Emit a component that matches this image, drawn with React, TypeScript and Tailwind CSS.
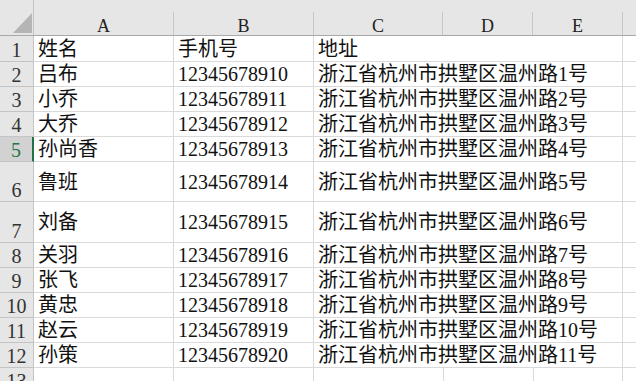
import React from "react";

const rows = [
  { n: 1, h: "h-[26px]", tall: false, a: "姓名", b: "手机号", c: "地址" },
  { n: 2, h: "h-[25px]", tall: false, a: "吕布", b: "12345678910", c: "浙江省杭州市拱墅区温州路1号" },
  { n: 3, h: "h-[25px]", tall: false, a: "小乔", b: "12345678911", c: "浙江省杭州市拱墅区温州路2号" },
  { n: 4, h: "h-[25px]", tall: false, a: "大乔", b: "12345678912", c: "浙江省杭州市拱墅区温州路3号" },
  { n: 5, h: "h-[25px]", tall: false, a: "孙尚香", b: "12345678913", c: "浙江省杭州市拱墅区温州路4号" },
  { n: 6, h: "h-[40px]", tall: true, a: "鲁班", b: "12345678914", c: "浙江省杭州市拱墅区温州路5号" },
  { n: 7, h: "h-[41px]", tall: true, a: "刘备", b: "12345678915", c: "浙江省杭州市拱墅区温州路6号" },
  { n: 8, h: "h-[25px]", tall: false, a: "关羽", b: "12345678916", c: "浙江省杭州市拱墅区温州路7号" },
  { n: 9, h: "h-[25px]", tall: false, a: "张飞", b: "12345678917", c: "浙江省杭州市拱墅区温州路8号" },
  { n: 10, h: "h-[25px]", tall: false, a: "黄忠", b: "12345678918", c: "浙江省杭州市拱墅区温州路9号" },
  { n: 11, h: "h-[25px]", tall: false, a: "赵云", b: "12345678919", c: "浙江省杭州市拱墅区温州路10号" },
  { n: 12, h: "h-[25px]", tall: false, a: "孙策", b: "12345678920", c: "浙江省杭州市拱墅区温州路11号" },
  { n: 13, h: "h-[25px]", tall: false, a: "", b: "", c: "" },
];

const colHeads = [
  { label: "A", w: "w-[140px]" },
  { label: "B", w: "w-[140px]" },
  { label: "C", w: "w-[129px]" },
  { label: "D", w: "w-[90px]" },
  { label: "E", w: "w-[90px]" },
];

export default function App() {
  return (
    <div className="w-[636px] h-[381px] overflow-hidden bg-white text-[#111] font-['Liberation_Serif','Noto_Sans_CJK_SC',serif]">
      {/* --- Column headers --- */}
      <div className="flex h-[36px] bg-[#e6e6e6] border-b border-[#a8a8a8]">
        <div className="w-[34px] shrink-0 h-full flex items-end justify-end pr-[1px] pb-[2px] border-r border-[#c4c4c4]">
          <svg width="19" height="20" viewBox="0 0 19 20">
            <polygon points="19,0 19,20 0,20" fill="#b5b5b5" />
          </svg>
        </div>
        {colHeads.map((c) => (
          <div key={c.label} className={`${c.w} shrink-0 h-full flex flex-col`}>
            <div className="h-[12px]" />
            <div className="flex-1 flex items-end justify-center border-r border-[#c8c8c8] text-[18px] leading-[18px] text-[#222]">
              {c.label}
            </div>
          </div>
        ))}
        <div className="flex-1" />
      </div>

      {/* --- Rows --- */}
      {rows.map((r) => (
        <div key={r.n} className={`flex ${r.h} border-b border-[#dadada]`}>
          <div
            className={
              r.n === 5
                ? "w-[34px] shrink-0 flex items-end justify-center bg-[#d2d2d2] text-[#217346] border-r-2 border-[#217346] -mb-[1px] border-b border-b-[#c4c4c4] text-[20px] leading-[20px] pb-[1px]"
                : "w-[34px] shrink-0 flex items-end justify-center bg-[#e6e6e6] text-[#333] border-r border-[#c4c4c4] -mb-[1px] border-b border-b-[#c4c4c4] text-[20px] leading-[20px] pb-[1px]"
            }
          >
            {r.n}
          </div>
          <div className="w-[140px] shrink-0 flex items-center pl-[4px] border-r border-[#dadada] text-[20px] leading-[22px] whitespace-nowrap">
            {r.a}
          </div>
          <div className="w-[140px] shrink-0 flex items-center pl-[4px] border-r border-[#dadada] text-[20px] leading-[22px] whitespace-nowrap">
            {r.b}
          </div>
          <div className="w-[129px] shrink-0 flex items-center pl-[4px] text-[20px] leading-[22px] whitespace-nowrap overflow-visible relative z-10">
            {r.c}
          </div>
          <div className={`w-[90px] shrink-0 ${r.c ? "" : "border-l border-[#dadada]"}`} />
          <div className={`w-[90px] shrink-0 border-r border-[#dadada] ${r.c ? "" : "border-l border-[#dadada]"}`} />
          <div className="flex-1" />
        </div>
      ))}
    </div>
  );
}
